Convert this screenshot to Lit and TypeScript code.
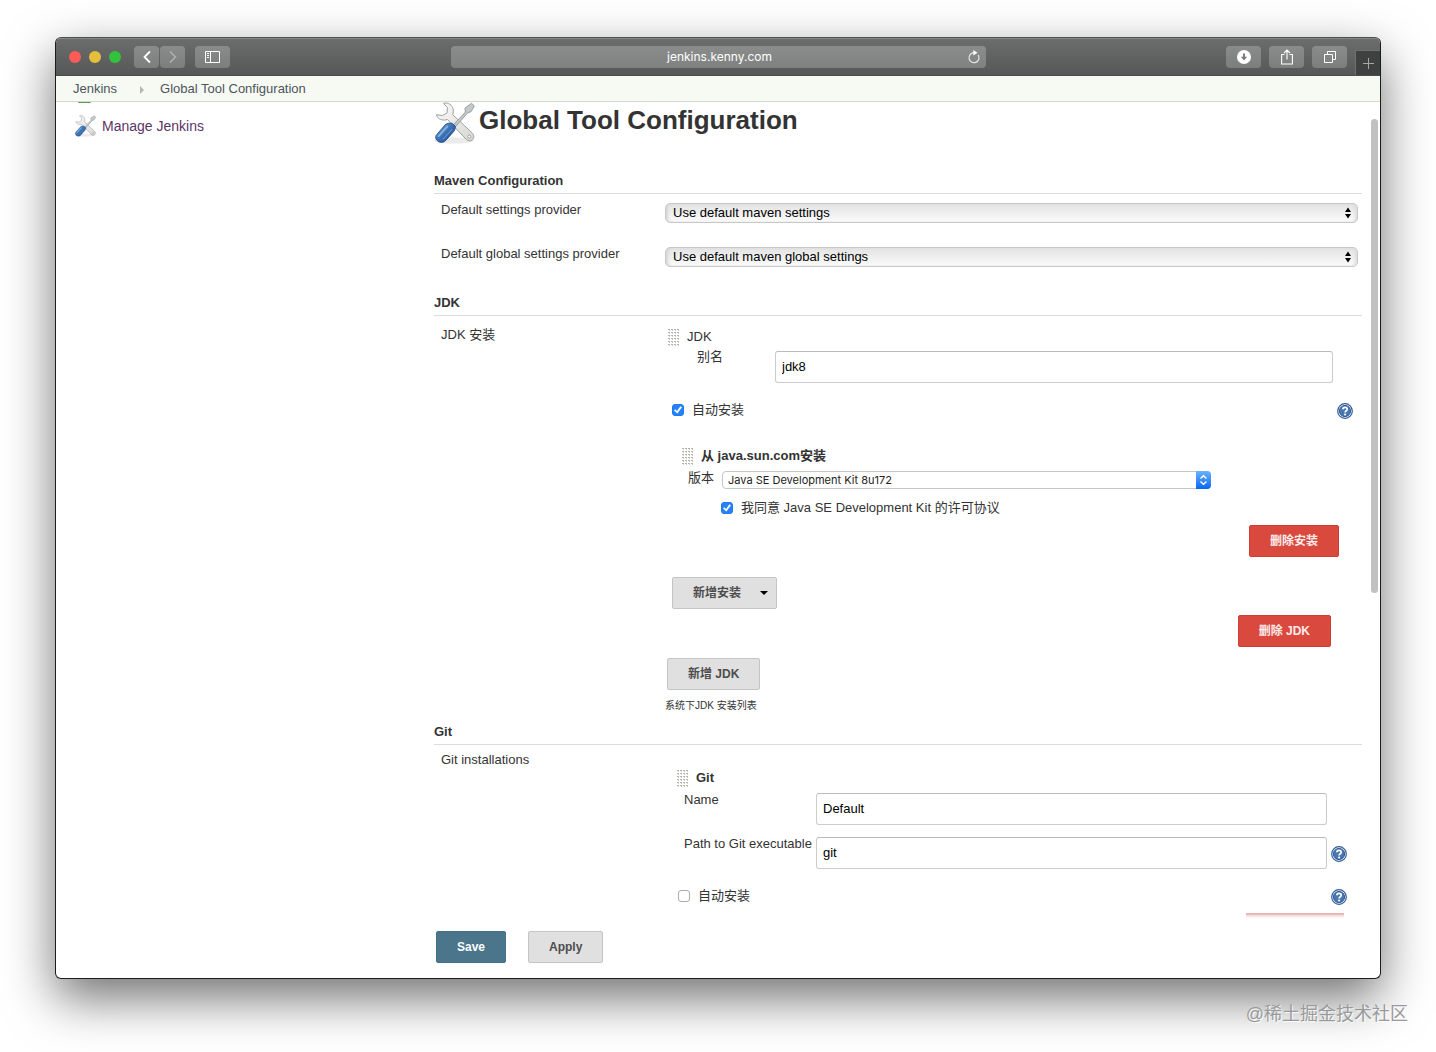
import { LitElement, html, css, svg } from "lit";
import { customElement } from "lit/decorators.js";

const toolsIcon = (size: number) => html`
  <svg class="tools" width=${size} height=${size} viewBox="0 0 48 48" aria-hidden="true">
    <defs>
      <linearGradient id="steel" x1="0" y1="0" x2="1" y2="1">
        <stop offset="0" stop-color="#fbfbfa" />
        <stop offset="1" stop-color="#d6d7d4" />
      </linearGradient>
      <linearGradient id="grip" x1="0" y1="0" x2="1" y2="1">
        <stop offset="0" stop-color="#83b0df" />
        <stop offset="0.5" stop-color="#3a71b5" />
        <stop offset="1" stop-color="#1f4b87" />
      </linearGradient>
    </defs>
    <ellipse cx="24" cy="44" rx="23" ry="3.5" fill="#000" opacity="0.08" />
    <path
      d="M12 1.500 C16 0.500 20.500 2 22.500 6.500 C23.700 9.500 23.500 12 22.500 14.500 L44.500 35 C47.500 38 47 41.500 44.800 43.300 C42.500 45.200 39.500 44.500 37.500 42.300 L16.500 20 C12 21.600 7.500 20 5.300 17.500 C4.400 16.300 4 15.500 4 14.500 L11 15.500 L16 12.500 L16.500 6.500 Z"
      fill="url(#steel)" stroke="#9b9d99" stroke-width="1.100" stroke-linejoin="round" />
    <circle cx="41.500" cy="39.500" r="1.700" fill="#fff" stroke="#8d8f8b" stroke-width="0.900" />
    <path d="M23 26.500 L37 11.500 L36.500 7 L44 1.500 L47.300 4.500 L43.500 11 L39.500 12.500 L25.500 28.500 Z"
      fill="#c4c9cc" stroke="#8e9395" stroke-width="1" stroke-linejoin="round" />
    <path d="M4.500 37 L13.500 26.500 C15.500 24.200 19 23.800 22 24.500 L25.500 27.600 C25.700 30.500 24.500 33 22.500 35 L14 44.500 C11.500 47 7 46.500 4.700 44 C2.500 41.700 2.500 39.200 4.500 37 Z"
      fill="url(#grip)" stroke="#204a87" stroke-width="1" />
    <path d="M6.500 39 L16.500 27.800" stroke="#a9c9ec" stroke-width="2" stroke-linecap="round" opacity="0.700" />
    <path d="M11.500 42.500 L21.500 31.500" stroke="#7aa6d8" stroke-width="1.200" stroke-linecap="round" opacity="0.700" />
  </svg>`;

const helpIcon = html`
  <svg width="16" height="16" viewBox="0 0 16 16" aria-hidden="true">
    <circle cx="8" cy="8" r="7.300" fill="#fff" stroke="#2b5a97" stroke-width="1.200" />
    <circle cx="8" cy="8" r="5.600" fill="#4a78b2" stroke="#24508a" stroke-width="0.900" />
    <path d="M5.900 6.300 C5.900 3.700 10.200 3.700 10.200 6.200 C10.200 7.800 8.100 7.700 8.100 9.500" fill="none" stroke="#fff" stroke-width="1.700" />
    <circle cx="8.100" cy="11.500" r="1.100" fill="#fff" />
  </svg>`;

const dots = [0, 1, 2, 3].flatMap((c) =>
  [0, 1, 2, 3, 4, 5].map(
    (r) => svg`<rect x=${c * 3} y=${r * 3} width="2" height="1" fill="#b4b4ae"></rect><rect x=${c * 3 + 1} y=${r * 3 + 1} width="1" height="1" fill="#cfcfca"></rect>`
  )
);
const handle = html`<svg class="handle" width="12" height="17" viewBox="0 0 12 17" aria-hidden="true">${dots}</svg>`;

const helpButton = html`<button class="help" type="button" aria-label="Help">${helpIcon}</button>`;

const classicArrow = html`<svg width="6" height="12" viewBox="0 0 6 12"><path d="M0 5 L3 0.500 L6 5 Z M0 7 L3 11.500 L6 7 Z" fill="#000" /></svg>`;
const aquaArrow = html`<svg width="9" height="12" viewBox="0 0 9 12"><path d="M1.500 4.500 L4.500 1.700 L7.500 4.500 M1.500 7.500 L4.500 10.300 L7.500 7.500" fill="none" stroke="#fff" stroke-width="1.400" /></svg>`;

const selectBox = (id: string, value: string, variant: "classic" | "aqua") => html`
  <div class="box ${variant}">
    <select class="field" id=${id}>
      <option>${value}</option>
    </select>
    <span class="arrow">${variant === "aqua" ? aquaArrow : classicArrow}</span>
  </div>`;

const base = css`
  :host {
    font-family: "Liberation Sans", "Noto Sans CJK SC", sans-serif;
    font-size: 13px;
    line-height: 20px;
    color: #333;
  }
  * { box-sizing: border-box; }
  button, input, select { font: inherit; margin: 0; }
  svg { display: block; flex: none; }
  a { text-decoration: none; }
`;

const selectStyles = css`
  .box { display: grid; align-items: center; min-width: 0; }
  .field, .arrow { grid-area: 1 / 1; }
  .field { width: 100%; appearance: none; outline: 0; color: #000; }
  .arrow { justify-self: end; pointer-events: none; }
  .classic .field {
    height: 20px;
    padding: 0 24px 1px 7px;
    border: 1px solid #c8c8c8;
    border-radius: 5px;
    background: linear-gradient(#e3e3e3, #fbfbfb);
    box-shadow: inset 3px 0 3px -1px #d6d6d6, inset -3px 0 3px -1px #dedede;
    line-height: 18px;
  }
  .classic .arrow { margin-right: 7px; }
  .aqua .field {
    height: 18px;
    padding: 0 20px 0 5px;
    border: 1px solid #c6c6c6;
    border-radius: 4px;
    background: #fff;
    font-family: Inter, sans-serif;
    font-size: 11px;
    line-height: 16px;
    color: #222;
  }
  .aqua .arrow {
    display: grid;
    place-items: center;
    width: 15px;
    height: 18px;
    border-radius: 0 4px 4px 0;
    background: linear-gradient(#6cb3fa, #0867f5);
  }
`;

@customElement("browser-toolbar")
class BrowserToolbar extends LitElement {
  static styles = [
    base,
    css`
      :host {
        display: grid;
        grid-template-columns: 395px minmax(0, 1fr) 394px;
        align-items: center;
        height: 38px;
        background: linear-gradient(#6c6e6d, #565857);
        box-shadow: inset 0 1px #858786;
        border-bottom: 1px solid #4b4d4c;
      }
      .group { display: flex; align-items: center; }
      .left { padding-left: 13px; }
      .light { width: 12px; height: 12px; border-radius: 50%; margin-right: 8px; }
      .red { background: #fc5b57; }
      .yellow { background: #e5bf3c; }
      .green { background: #34c13b; margin-right: 13px; }
      .btn {
        display: grid;
        place-items: center;
        width: 35px;
        height: 22px;
        padding: 0;
        border: 0;
        border-radius: 4px;
        background: linear-gradient(#8a8c8b, #7c7e7d);
      }
      .nav { width: 25px; margin-right: 1px; }
      .panel { margin-left: 9px; }
      .url {
        display: flex;
        align-items: center;
        height: 22px;
        padding: 0 5px 0 21px;
        border-radius: 4px;
        background: linear-gradient(#8b8d8c, #7f8180);
      }
      .address {
        flex: 1;
        min-width: 0;
        padding: 0;
        border: 0;
        outline: 0;
        background: none;
        color: #fff;
        font-family: Inter, sans-serif;
        font-size: 12px;
        text-align: center;
      }
      .reload { width: 14px; height: 14px; padding: 0; border: 0; background: none; }
      .right { justify-content: flex-end; gap: 8px; align-self: stretch; }
      .tab {
        display: grid;
        place-items: center;
        align-self: flex-end;
        width: 25px;
        height: 25px;
        padding: 0;
        border: 1px solid #6f7170;
        border-width: 1px 0 0 1px;
        background: #3f4140;
      }
    `,
  ];
  render() {
    return html`
      <div class="group left">
        <span class="light red"></span><span class="light yellow"></span><span class="light green"></span>
        <button class="btn nav" aria-label="Back">
          <svg width="12" height="14" viewBox="0 0 12 14"><path d="M9 1.500 L3.500 7 L9 12.500" fill="none" stroke="#fff" stroke-width="1.800" /></svg>
        </button>
        <button class="btn nav" aria-label="Forward">
          <svg width="12" height="14" viewBox="0 0 12 14"><path d="M3 1.500 L8.500 7 L3 12.500" fill="none" stroke="#b0b2b1" stroke-width="1.500" /></svg>
        </button>
        <button class="btn panel" aria-label="Show sidebar">
          <svg width="15" height="12" viewBox="0 0 15 12">
            <path d="M0.500 0.500 H14.500 V11.500 H0.500 Z M5.500 0.500 V11.500 M2 2.500 H4 M2 4.500 H4 M2 6.500 H4" fill="none" stroke="#fff" />
          </svg>
        </button>
      </div>
      <div class="url">
        <input class="address" aria-label="Address" .value=${"jenkins.kenny.com"} />
        <button class="reload" aria-label="Reload">
          <svg width="14" height="14" viewBox="0 0 14 14">
            <path d="M11.200 5 A5 5 0 1 1 7 2.700" fill="none" stroke="#e6e6e6" stroke-width="1.200" />
            <path d="M6.300 0 L10.500 2.800 L6.300 5.500 Z" fill="#fff" />
          </svg>
        </button>
      </div>
      <div class="group right">
        <button class="btn" aria-label="Downloads">
          <svg width="14" height="14" viewBox="0 0 14 14">
            <circle cx="7" cy="7" r="7" fill="#fff" />
            <path d="M7 3.500 V8" stroke="#7a7c7b" stroke-width="2" />
            <path d="M3.800 6.800 H10.200 L7 10.500 Z" fill="#7a7c7b" />
          </svg>
        </button>
        <button class="btn" aria-label="Share">
          <svg width="12" height="16" viewBox="0 0 12 16">
            <path d="M3.500 5.500 H0.600 V15 H11.400 V5.500 H8.500 M6 10.500 V1.200 M3 4 L6 1 L9 4" fill="none" stroke="#fff" stroke-width="1.100" />
          </svg>
        </button>
        <button class="btn" aria-label="Tabs">
          <svg width="12" height="12" viewBox="0 0 12 12">
            <path d="M0.500 3.500 H8.500 V11.500 H0.500 Z M3.500 3.500 V0.500 H11.500 V8.500 H8.500" fill="none" stroke="#fff" />
          </svg>
        </button>
        <button class="tab" aria-label="New tab">
          <svg width="11" height="11" viewBox="0 0 11 11"><path d="M5.500 0 V11 M0 5.500 H11" stroke="#a5a7a6" /></svg>
        </button>
      </div>`;
  }
}

@customElement("app-root")
class AppRoot extends LitElement {
  static styles = [
    base,
    selectStyles,
    css`
      :host {
        display: flex;
        flex-direction: column;
        min-height: 100vh;
        box-sizing: border-box;
        padding: 37px 55px 28px;
        background: #fff;
      }
      .window {
        flex: 1;
        display: flex;
        flex-direction: column;
        border: 1px solid #1c1c1c;
        border-top-color: #4d4f4e;
        border-radius: 6px;
        overflow: hidden;
        background: #fff;
        box-shadow: 0 19px 50px rgba(0, 0, 0, 0.56);
      }
      .crumbs {
        display: flex;
        align-items: center;
        height: 26px;
        padding-left: 17px;
        border-bottom: 1px solid #d3dbd1;
        background: #f6faf2;
      }
      .crumbs a { color: #4d545d; }
      .chevron { margin: 2px 16px 0 23px; }
      .body { flex: 1; display: flex; position: relative; }
      .side { flex: 0 0 378px; padding-left: 18px; }
      .arc {
        width: 13px;
        height: 1px;
        margin-left: 4px;
        border-radius: 0 0 8px 8px;
        background: #5a9e4c;
      }
      .task {
        display: flex;
        align-items: center;
        gap: 6px;
        margin-top: 12px;
        font-size: 14px;
        color: #5c3566;
      }
      .main { flex: 1; min-width: 0; padding-right: 18px; display: flex; flex-direction: column; }
      .scroll {
        width: 7px;
        height: 474px;
        position: absolute;
        top: 17px;
        right: 2px;
        border-radius: 4px;
        background: #c1c1c1;
      }
      .head { display: flex; gap: 4px; margin-left: -1px; height: 44px; }
      h1 { margin: 0; font-size: 26px; line-height: 36px; }
      h2 {
        margin: 0;
        padding-bottom: 2px;
        border-bottom: 1px solid #dcdcdc;
        font-size: 13px;
        line-height: 20px;
      }
      .maven { margin-top: 25px; }
      .jdk { margin-top: 5px; }
      .git { margin-top: 8px; }
      .row { display: grid; grid-template-columns: 231px minmax(0, 1fr); }
      .name { padding-left: 7px; }
      .setting { height: 44px; align-items: start; }
      .setting .box { margin: 3px 4px 0 0; }
      .rows { padding-top: 6px; }
      .jdk .name { padding-top: 9px; }
      .git .name { padding-top: 5px; }
      .line { display: flex; }
      .title { align-items: center; gap: 7px; }
      .bold { font-weight: bold; }
      .text {
        height: 32px;
        min-width: 0;
        flex: 1;
        padding: 0 6px 2px;
        border: 1px solid #ccc;
        border-top-color: #bbb;
        border-radius: 3px;
        outline: 0;
        background: #fff;
        color: #000;
      }
      .check { align-items: center; gap: 8px; }
      .tick {
        appearance: none;
        display: grid;
        place-items: center;
        width: 12px;
        height: 12px;
        border: 1px solid #ababab;
        border-radius: 3px;
        background: #fff;
      }
      .tick:checked { border-color: #1b7bf2; background: #2683f6; }
      .tick:checked::before {
        content: "";
        width: 8px;
        height: 8px;
        background: #fff;
        clip-path: polygon(0 55%, 15% 40%, 38% 62%, 80% 2%, 100% 15%, 42% 94%);
      }
      .help { display: block; width: 16px; height: 16px; padding: 0; border: 0; background: none; }
      .check .help { margin: 2px 0 0 auto; }
      .btn {
        height: 32px;
        padding: 0 20px;
        border: 1px solid #c4c4c4;
        border-radius: 2px;
        background: #e0e0e0;
        color: #4d4d4d;
        font-size: 12px;
        font-weight: bold;
      }
      .danger { border-color: #cd3e34; background: #d9493e; color: #fdeceb; }
      .primary { border-color: #45708a; background: #4a758b; color: #fff; }
      .menu { display: flex; align-items: center; gap: 19px; padding-right: 8px; }
      .end { justify-content: flex-end; }

      .jdk .top { padding: 11px 0 0 3px; }
      .alias { padding: 0 29px 0 32px; }
      .alias label { flex: 0 0 78px; }
      .alias .text { margin-top: 4px; }
      .auto { margin-top: 17px; padding: 0 9px 0 7px; }
      .installer { margin-top: 26px; padding-left: 17px; }
      .version { margin-top: 2px; padding-left: 23px; }
      .version label { flex: 0 0 34px; }
      .version .box { flex: 0 1 489px; margin-top: 3px; align-self: flex-start; }
      .agree { margin-top: 9px; padding-left: 56px; }
      .remove-installer { margin-top: 7px; padding-right: 23px; }
      .add-installer { margin-top: 20px; padding-left: 7px; }
      .remove-jdk { margin-top: 6px; padding-right: 31px; }
      .add-jdk { margin-top: 11px; padding-left: 2px; }
      .note { margin-top: 8px; font-size: 10px; line-height: 16px; }

      .git .top { padding: 23px 0 0 12px; }
      .pair { padding: 2px 35px 0 19px; }
      .path { padding: 9px 15px 0 19px; }
      .pair label, .path label { flex: 0 0 132px; }
      .pair .text, .path .text { margin-top: 3px; }
      .path .help { margin: 12px 0 0 4px; }
      .git .auto { padding: 0 15px 0 13px; }
      .clipped { margin-top: 7px; padding-right: 18px; }
      .edge { width: 98px; height: 5px; background: linear-gradient(#e3b5b2 20%, #f9d9d7 50%, #fff); }
      .footer { display: flex; gap: 22px; margin-top: auto; padding: 13px 0 15px 2px; }
      .watermark {
        align-self: flex-end;
        position: relative;
        margin: 25px -27px 0 0;
        font-size: 18px;
        line-height: 20px;
        color: #999;
        text-shadow: 1px 1px 1px #fff;
      }
    `,
  ];

  render() {
    return html`
      <div class="window">
        <browser-toolbar></browser-toolbar>
        <nav class="crumbs">
          <a href="#">Jenkins</a>
          <svg class="chevron" width="4" height="8" viewBox="0 0 4 8"><path d="M0 0 L4 4 L0 8 Z" fill="#b5b8b2" /></svg>
          <a href="#">Global Tool Configuration</a>
        </nav>
        <div class="body">
          <aside class="side">
            <div class="arc"></div>
            <a class="task" href="#">${toolsIcon(22)}<span>Manage Jenkins</span></a>
          </aside>
          <main class="main">
            <header class="head">${toolsIcon(42)}<h1>Global Tool Configuration</h1></header>

            <section class="maven">
              <h2>Maven Configuration</h2>
              <div class="rows">
                <div class="row setting">
                  <label class="name" for="settings">Default settings provider</label>
                  ${selectBox("settings", "Use default maven settings", "classic")}
                </div>
                <div class="row setting">
                  <label class="name" for="global-settings">Default global settings provider</label>
                  ${selectBox("global-settings", "Use default maven global settings", "classic")}
                </div>
              </div>
            </section>

            <section class="jdk">
              <h2>JDK</h2>
              <div class="row">
                <span class="name">JDK 安装</span>
                <div>
                  <div class="line title top">${handle}<span>JDK</span></div>
                  <div class="line alias">
                    <label for="alias">别名</label>
                    <input class="text" id="alias" .value=${"jdk8"} />
                  </div>
                  <div class="line check auto">
                    <input class="tick" type="checkbox" id="jdk-auto" checked />
                    <label for="jdk-auto">自动安装</label>
                    ${helpButton}
                  </div>
                  <div class="line title installer bold">${handle}<span>从 java.sun.com安装</span></div>
                  <div class="line version">
                    <label for="version">版本</label>
                    ${selectBox("version", "Java SE Development Kit 8u172", "aqua")}
                  </div>
                  <div class="line check agree">
                    <input class="tick" type="checkbox" id="agree" checked />
                    <label for="agree">我同意 Java SE Development Kit 的许可协议</label>
                  </div>
                  <div class="line end remove-installer"><button class="btn danger">删除安装</button></div>
                  <div class="line add-installer">
                    <button class="btn menu">
                      新增安装
                      <svg width="8" height="4" viewBox="0 0 8 4"><path d="M0 0 H8 L4 4 Z" fill="#000" /></svg>
                    </button>
                  </div>
                  <div class="line end remove-jdk"><button class="btn danger">删除 JDK</button></div>
                  <div class="line add-jdk"><button class="btn">新增 JDK</button></div>
                  <div class="note">系统下JDK 安装列表</div>
                </div>
              </div>
            </section>

            <section class="git">
              <h2>Git</h2>
              <div class="row">
                <span class="name">Git installations</span>
                <div>
                  <div class="line title top bold">${handle}<span>Git</span></div>
                  <div class="line pair">
                    <label for="git-name">Name</label>
                    <input class="text" id="git-name" .value=${"Default"} />
                  </div>
                  <div class="line path">
                    <label for="git-path">Path to Git executable</label>
                    <input class="text" id="git-path" .value=${"git"} />
                    ${helpButton}
                  </div>
                  <div class="line check auto">
                    <input class="tick" type="checkbox" id="git-auto" />
                    <label for="git-auto">自动安装</label>
                    ${helpButton}
                  </div>
                  <div class="line end clipped"><div class="edge"></div></div>
                </div>
              </div>
            </section>

            <footer class="footer">
              <button class="btn primary">Save</button>
              <button class="btn">Apply</button>
            </footer>
          </main>
          <div class="scroll"></div>
        </div>
      </div>
      <div class="watermark">@稀土掘金技术社区</div>`;
  }
}
